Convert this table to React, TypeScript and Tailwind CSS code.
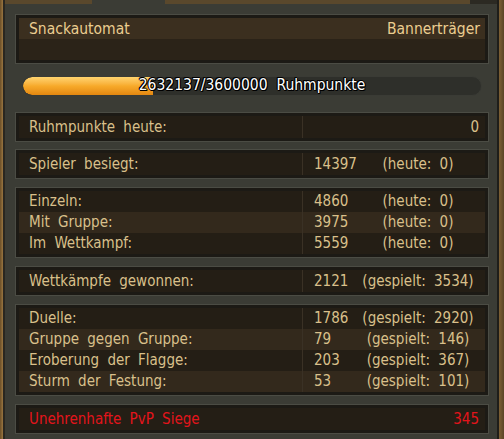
import React from "react";

type RowProps = {
  label: string;
  value?: string;
  note?: string;
  alt?: boolean;
  tall?: boolean;
};

const font = "[font-family:'DejaVu_Sans_Condensed','DejaVu_Sans',sans-serif] [font-stretch:semi-condensed]";

function Box({ children, className = "" }: { children: React.ReactNode; className?: string }) {
  return (
    <div className={`border border-[#4b4c44] ${className}`}>
      <div className="border-[3px] border-[#1c1a15] bg-[#241e15]">{children}</div>
    </div>
  );
}

function Row({ label, value, note, alt, tall }: RowProps) {
  return (
    <div
      className={`flex items-center ${tall ? "h-[22px]" : "h-[21px]"} ${alt ? "bg-[#33291c]" : ""}`}
    >
      <div className="w-[283px] pl-[10px] whitespace-nowrap">{label}</div>
      <div className="w-px self-stretch bg-[#3a3125]" />
      <div className="flex flex-1 items-center whitespace-nowrap">
        <span className="w-[53px] pl-[11px]">{value}</span>
        <span className="flex-1 pr-[5px] text-center">{note}</span>
      </div>
    </div>
  );
}

export default function App() {
  return (
    <div
      className={`flex h-[439px] w-[504px] overflow-hidden bg-[#3b3c35] ${font} text-[15px] [word-spacing:4px] text-[#d9c08b]`}
    >
      {/* left frame edge */}
      <div className="w-[3px] bg-gradient-to-r from-[#6b4f28] to-[#9a7640]" />
      <div className="w-[2px] bg-[#2a2720]" />

      <div className="flex flex-1 flex-col">
        {/* top frame edge */}
        <div className="flex h-[4px]">
          <div className="w-[87px] bg-[#5a482c]" />
          <div className="w-[73px]" />
          <div className="w-[305px] bg-[#5a482c]" />
          <div className="flex-1 bg-[#2c2a23]" />
        </div>

        <div className="flex flex-col pl-[10px] pt-[10px]">
          {/* header */}
          <div className="w-[474px] border border-[#4b4c44]">
            <div className="border-[3px] border-[#1c1a15]">
              <div className="flex h-[21px] items-center justify-between bg-[#3b2f1f] pl-[10px] pr-[5px] pt-[3px] text-[15.5px] text-[#ebcd90] [word-spacing:0px]">
                <span>Snackautomat</span>
                <span>Bannerträger</span>
              </div>
              <div className="h-[21px] bg-[#2b2318]" />
            </div>
          </div>

          {/* progress bar */}
          <div className="relative ml-[7px] mt-[12px] h-[20px] w-[460px] overflow-hidden rounded-full border border-[#3a3b35] bg-[#2e2f2a]">
            <div className="h-full w-[130px] rounded-l-full bg-gradient-to-b from-[#ffd46e] via-[#f7aa2a] to-[#e3870f]" />
            <div className="absolute inset-0 flex items-center justify-center whitespace-pre text-[15.5px] text-white [word-spacing:0px] [text-shadow:1px_0_0_#000,-1px_0_0_#000,0_1px_0_#000,0_-1px_0_#000,1px_1px_0_#000,-1px_-1px_0_#000]">
              {"2632137/3600000  Ruhmpunkte"}
            </div>
          </div>

          <Box className="mt-[16px] w-[474px]">
            <div className="flex h-[22px] items-center">
              <div className="w-[283px] pl-[10px]">Ruhmpunkte heute:</div>
              <div className="w-px self-stretch bg-[#3a3125]" />
              <div className="flex-1 pr-[6px] text-right">0</div>
            </div>
          </Box>

          <Box className="mt-[7px] w-[474px]">
            <Row tall label="Spieler besiegt:" value="14397" note="(heute: 0)" />
          </Box>

          <Box className="mt-[8px] w-[474px]">
            <Row label="Einzeln:" value="4860" note="(heute: 0)" />
            <Row alt label="Mit Gruppe:" value="3975" note="(heute: 0)" />
            <Row label="Im Wettkampf:" value="5559" note="(heute: 0)" />
          </Box>

          <Box className="mt-[8px] w-[474px]">
            <Row tall label="Wettkämpfe gewonnen:" value="2121" note="(gespielt: 3534)" />
          </Box>

          <Box className="mt-[8px] w-[474px]">
            <Row label="Duelle:" value="1786" note="(gespielt: 2920)" />
            <Row alt label="Gruppe gegen Gruppe:" value="79" note="(gespielt: 146)" />
            <Row label="Eroberung der Flagge:" value="203" note="(gespielt: 367)" />
            <Row alt label="Sturm der Festung:" value="53" note="(gespielt: 101)" />
          </Box>

          <Box className="mt-[8px] w-[474px]">
            <div className="flex h-[22px] items-center justify-between pl-[10px] pr-[6px] text-[#e3141b]">
              <span>Unehrenhafte PvP Siege</span>
              <span>345</span>
            </div>
          </Box>
        </div>
      </div>

      {/* right frame edge */}
      <div className="w-[2px] bg-[#1f1e1a]" />
      <div className="w-[5px] bg-gradient-to-r from-[#7d6034] to-[#5a4426]" />
    </div>
  );
}
